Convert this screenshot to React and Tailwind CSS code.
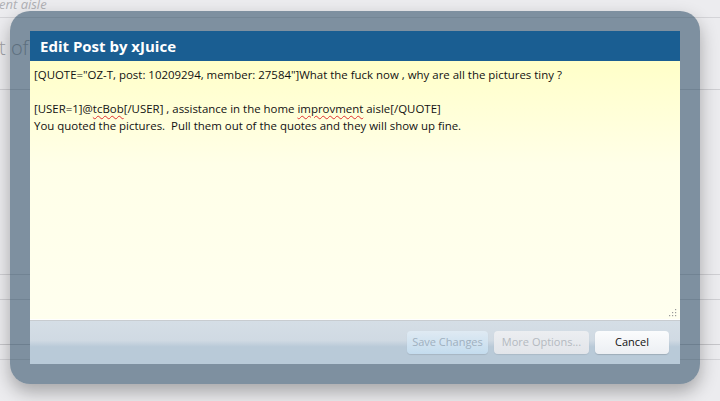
export default function App() {
  return (
    <div className="relative w-[720px] h-[401px] overflow-hidden bg-[#ececef] font-['Open_Sans',sans-serif]">
      {/* page behind the overlay */}
      <div className="flex flex-col">
        <div className="h-[18px] border-b border-[#d4d4d8] -ml-[1px] text-[13px] italic leading-[8px] text-[#b0b0b4]">ent aisle</div>
        <div className="h-[72px] border-b border-[#cfcfd3] flex items-center text-[20px] font-light text-[#a0a0a4] -ml-[1px] pb-[12px] whitespace-nowrap">t of t</div>
        <div className="h-[185px] border-b border-[#cfcfd3]"></div>
        <div className="h-[25px] border-b border-[#cfcfd3]"></div>
        <div className="h-[45px] border-b border-[#c6c6ca]"></div>
        <div className="h-[15px] border-b border-[#d4d4d8]"></div>
      </div>

      {/* overlay frame */}
      <div className="absolute left-[10px] top-[11px] w-[690px] h-[373px] rounded-[20px] bg-[rgba(36,69,94,0.55)] p-[20px] shadow-[0_8px_18px_rgba(0,0,0,0.3)]">
        <div className="flex flex-col h-[333px]">
          <div className="h-[30px] bg-[#1a5e92] flex items-center pl-[10px] text-white font-bold text-[15px]">
            Edit Post by xJuice
          </div>
          <div className="relative h-[260px] bg-gradient-to-b from-[#ffffc8] via-[#ffffe8] via-40% to-[#ffffef] border-b border-[#c8ccd0] shadow-[inset_0_-1px_0_#ffffff] pl-[4px] pt-[5px] pr-2 text-[11.45px] leading-[17px] text-[#111]">
            <p>[QUOTE="OZ-T, post: 10209294, member: 27584"]What the fuck now , why are all the pictures tiny ?</p>
            <p>&nbsp;</p>
            <p>
              [USER=1]@<span className="underline decoration-wavy decoration-[#e03030] decoration-1 underline-offset-2">tcBob</span>[/USER] , assistance in the home{' '}
              <span className="underline decoration-wavy decoration-[#e03030] decoration-1 underline-offset-2">improvment</span> aisle[/QUOTE]
            </p>
            <p>You quoted the pictures.&nbsp; Pull them out of the quotes and they will show up fine.</p>
            <svg className="absolute right-[3px] bottom-[3px]" width="8" height="8" viewBox="0 0 8 8">
              <rect x="6" y="0" width="1.2" height="1.2" fill="#9a9a9a" />
              <rect x="3" y="3" width="1.2" height="1.2" fill="#9a9a9a" />
              <rect x="6" y="3" width="1.2" height="1.2" fill="#9a9a9a" />
              <rect x="0" y="6" width="1.2" height="1.2" fill="#9a9a9a" />
              <rect x="3" y="6" width="1.2" height="1.2" fill="#9a9a9a" />
              <rect x="6" y="6" width="1.2" height="1.2" fill="#9a9a9a" />
            </svg>
          </div>
          <div className="flex-1 bg-gradient-to-b from-[#d5dee6] via-[#d0dae3] via-45% to-[#b9cad8] to-60% flex items-start justify-end gap-[6px] pt-[10px] pr-[11px] text-[11px]">
            <button className="w-[81px] h-[23px] rounded-[4px] bg-gradient-to-b from-[#dfeaf3] to-[#c4dcee] text-[#9fb0bf] shadow-[0_1px_1px_rgba(0,0,0,0.1)]">Save Changes</button>
            <button className="w-[95px] h-[23px] rounded-[4px] bg-gradient-to-b from-[#eceef1] to-[#e2e5ea] text-[#b4b9c0] shadow-[0_1px_1px_rgba(0,0,0,0.08)]">More Options...</button>
            <button className="w-[74px] h-[23px] rounded-[4px] bg-gradient-to-b from-[#fbfcfd] to-[#eceff3] text-[#111] shadow-[0_1px_1px_rgba(0,0,0,0.15)]">Cancel</button>
          </div>
        </div>
      </div>
    </div>
  )
}
